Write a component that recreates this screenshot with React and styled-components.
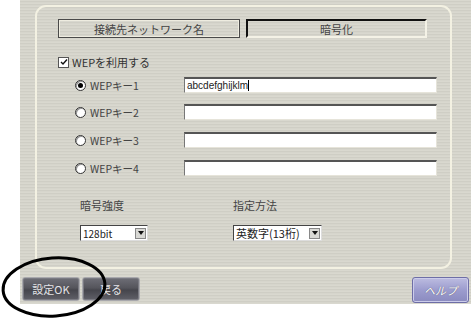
import React from 'react'
import styled, { createGlobalStyle } from 'styled-components'

const Global = createGlobalStyle`
  html, body { margin: 0; padding: 0; background: #fff; }
  body { font-family: "Noto Sans CJK JP", "Liberation Sans", sans-serif; }
`

const Page = styled.div`
  position: relative;
  width: 471px;
  height: 320px;
  padding-left: 20px;
  box-sizing: border-box;
  overflow: hidden;
`

const Screen = styled.div`
  width: 451px;
  height: 304px;
  display: flex;
  flex-direction: column;
  background-color: #d4d3ca;
  background-image: repeating-linear-gradient(
    to bottom,
    #d9d8cf 0px,
    #d9d8cf 1px,
    #cfcec5 1px,
    #cfcec5 2px,
    #d6d5cc 2px,
    #d6d5cc 3px
  );
`

const Panel = styled.div`
  margin: 5px 19px 0 15px;
  height: 264px;
  box-sizing: border-box;
  border: 2px solid #f3f1e2;
  border-radius: 11px;
  padding: 12px 12px 0 21px;
  display: flex;
  flex-direction: column;
  color: #333;
  font-size: 11px;
`

const Tabs = styled.div`
  display: flex;
  gap: 6px;
  margin-bottom: 16px;
`

const Tab = styled.div`
  height: 19px;
  width: ${p => p.$w}px;
  box-sizing: border-box;
  display: flex;
  align-items: center;
  justify-content: center;
  font-size: 11px;
  color: #444;
  border: 1px solid #4a4a4a;
  box-shadow: inset 1px 1px 0 #eeece0, inset -1px -1px 0 #eeece0;
  ${p => p.$active && `
    border-top: 2px solid #111;
    border-left: 2px solid #111;
    border-right: 2px solid #f4f2e6;
    border-bottom: 2px solid #f4f2e6;
    box-shadow: none;
  `}
`

const CheckRow = styled.label`
  display: flex;
  align-items: center;
  gap: 3px;
  height: 16px;
  margin-bottom: 7px;
`

const CheckBox = styled.span`
  width: 9px;
  height: 9px;
  border: 1px solid #555;
  background: #fff;
  display: flex;
  align-items: center;
  justify-content: center;
`

const KeyRow = styled.div`
  display: flex;
  align-items: center;
  height: 16px;
  padding-left: 17px;
  margin-top: ${p => p.$mt}px;
`

const Radio = styled.span`
  width: 9px;
  height: 9px;
  border-radius: 50%;
  border: 1px solid #333;
  background: #fff;
  box-shadow: inset 1px 1px 0 #999;
  display: flex;
  align-items: center;
  justify-content: center;
  &::after {
    content: '';
    width: 5px;
    height: 5px;
    border-radius: 50%;
    background: ${p => (p.$on ? '#000' : 'transparent')};
  }
`

const KeyLabel = styled.span`
  width: 94px;
  padding-left: 4px;
  font-size: 10.5px;
  color: #444;
`

const KeyInput = styled.div`
  width: 253px;
  height: 16px;
  box-sizing: border-box;
  background: #fff;
  border-top: 2px solid #555;
  border-left: 1px solid #777;
  border-right: 1px solid #e6e4da;
  border-bottom: 1px solid #e6e4da;
  font-family: "Liberation Sans", sans-serif;
  font-size: 10px;
  line-height: 13px;
  padding-left: 2px;
  color: #222;
`

const Caret = styled.span`
  display: inline-block;
  width: 1px;
  height: 11px;
  background: #000;
  vertical-align: -2px;
`

const Options = styled.div`
  display: grid;
  grid-template-columns: 153px 1fr;
  padding-left: 22px;
  margin-top: 21px;
  row-gap: 12px;
`

const OptLabel = styled.span`
  font-size: 11px;
  color: #444;
  height: 16px;
  line-height: 16px;
`

const Select = styled.div`
  width: ${p => p.$w}px;
  height: 16px;
  box-sizing: border-box;
  display: flex;
  align-items: center;
  justify-content: space-between;
  background: #fff;
  border-top: 1px solid #444;
  border-left: 1px solid #444;
  border-right: 1px solid #ddd;
  border-bottom: 1px solid #ddd;
  padding: 0 1px 0 2px;
  font-size: ${p => p.$fs || 10}px;
  color: #222;
`

const Arrow = styled.span`
  width: 11px;
  height: 11px;
  box-sizing: border-box;
  background: #d8d8d4;
  border: 1px solid #888;
  display: flex;
  align-items: center;
  justify-content: center;
  &::after {
    content: '';
    border-left: 3px solid transparent;
    border-right: 3px solid transparent;
    border-top: 4px solid #111;
  }
`

const Footer = styled.div`
  display: flex;
  justify-content: space-between;
  align-items: flex-start;
  padding: 8px 2px 0 2px;
`

const Group = styled.div`
  display: flex;
  gap: 2px;
`

const DarkButton = styled.button`
  width: 58px;
  height: 24px;
  border-radius: 3px;
  border: 1px solid #a8a8ac;
  background: linear-gradient(to bottom, #6e6e76 0%, #55555c 45%, #45454c 55%, #606068 100%);
  box-shadow: inset 0 0 0 1px #7a7a82;
  color: #e4e4e8;
  font-family: "Noto Sans CJK JP", sans-serif;
  font-size: 11px;
  padding: 0;
`

const HelpButton = styled.button`
  width: 57px;
  height: 26px;
  border-radius: 3px;
  border: 1px solid #6e6ea6;
  background: linear-gradient(to bottom, #bcbce0 0%, #9c9cce 50%, #8a8abf 100%);
  box-shadow: inset 0 0 0 1px #ccccea;
  color: #fff;
  font-family: "Noto Sans CJK JP", sans-serif;
  font-size: 11px;
  font-style: italic;
  padding: 0;
  text-shadow: 0 0 1px #445;
`

const Ellipse = styled.svg`
  position: absolute;
  left: 0;
  top: 254px;
  pointer-events: none;
`

export default function App() {
  const keys = [
    { n: 1, mt: 0, text: 'abcdefghijklm', on: true },
    { n: 2, mt: 11, text: '', on: false },
    { n: 3, mt: 12, text: '', on: false },
    { n: 4, mt: 12, text: '', on: false },
  ]
  return (
    <Page>
      <Global />
      <Screen>
        <Panel>
          <Tabs>
            <Tab $w={182}>接続先ネットワーク名</Tab>
            <Tab $w={181} $active>暗号化</Tab>
          </Tabs>
          <CheckRow>
            <CheckBox>
              <svg width="8" height="8" viewBox="0 0 8 8">
                <path d="M1 4 L3 6 L7 1.5" stroke="#111" strokeWidth="1.4" fill="none" />
              </svg>
            </CheckBox>
            WEPを利用する
          </CheckRow>
          {keys.map(k => (
            <KeyRow key={k.n} $mt={k.mt}>
              <Radio $on={k.on} />
              <KeyLabel>WEPキー{k.n}</KeyLabel>
              <KeyInput>
                {k.text}
                {k.on && <Caret />}
              </KeyInput>
            </KeyRow>
          ))}
          <Options>
            <OptLabel>暗号強度</OptLabel>
            <OptLabel>指定方法</OptLabel>
            <Select $w={68}>
              128bit
              <Arrow />
            </Select>
            <Select $w={89} $fs={11}>
              英数字(13桁)
              <Arrow />
            </Select>
          </Options>
        </Panel>
        <Footer>
          <Group>
            <DarkButton>設定OK</DarkButton>
            <DarkButton>戻る</DarkButton>
          </Group>
          <HelpButton>ヘルプ</HelpButton>
        </Footer>
      </Screen>
      <Ellipse width="112" height="66" viewBox="0 0 112 66">
        <ellipse cx="54" cy="33" rx="51" ry="29" fill="none" stroke="#000" strokeWidth="3" transform="rotate(-4 54 33)" />
      </Ellipse>
    </Page>
  )
}
